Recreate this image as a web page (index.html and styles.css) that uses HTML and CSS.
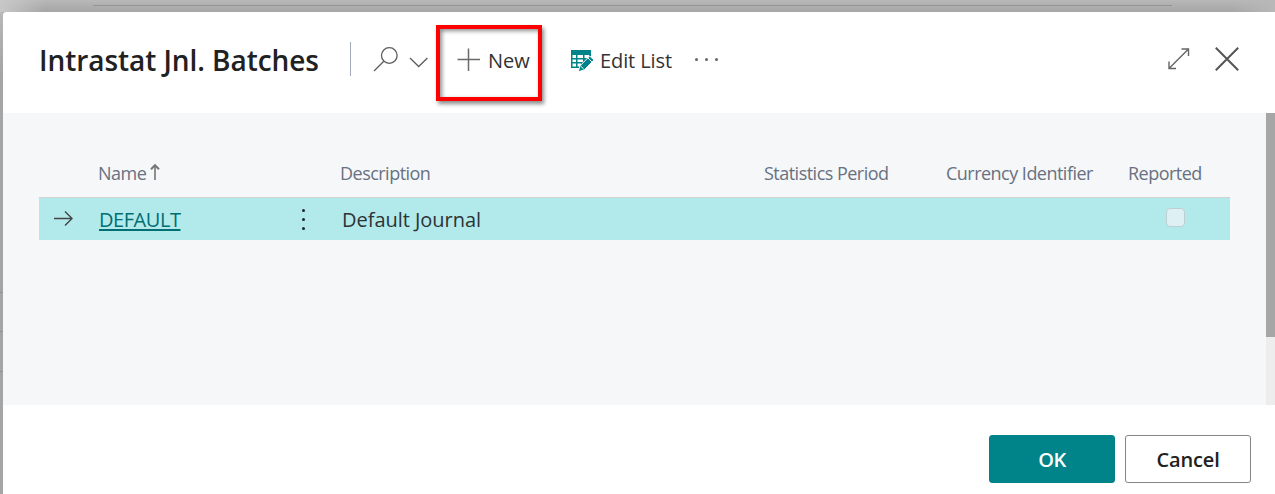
FILE: index.html
```html
<!DOCTYPE html>
<html lang="en">
<head>
<meta charset="utf-8">
<title>Intrastat Jnl. Batches</title>
<link rel="stylesheet" href="styles.css">
</head>
<body>
<div class="backdrop-top"><div class="backdrop-rule"></div></div>
<div class="stage">
  <div class="backdrop-side"><i></i><i></i><i></i></div>
  <main class="dialog">
    <header class="header">
      <h1 class="title">Intrastat Jnl. Batches</h1>
      <span class="divider"></span>
      <button class="search" aria-label="Search">
        <svg width="56" height="28" viewBox="0 0 56 28" fill="none" stroke="#5c5c5c" stroke-width="1.3"><circle cx="15.3" cy="10.5" r="7.8"/><path d="M9.8 16.2 0 26M36 13l8.7 8.5 8.7-8.5" /></svg>
      </button>
      <button class="action new">
        <svg width="24" height="24" viewBox="0 0 24 24" stroke="#6a6a6a" stroke-width="1.5"><path d="M11.5 1.5V24M.5 12.5h22.5"/></svg>
        <span class="new-label">New</span>
      </button>
      <button class="action edit">
        <svg width="24" height="22" viewBox="0 0 24 22"><path fill="#008489" d="M0 0h20v8l-6 9-5 1H0z"/><path fill="#fff" d="M1.5 5H5v3H1.5zM6.5 5H12v3H6.5zM13.5 5H18v3h-4.500zM1.500 9.500H5V12H1.500zM6.500 9.500H12V12H6.500zM1.500 13.500H5v3H1.500zM6.500 13.500H10v3H6.500z"/><path fill="#008489" stroke="#fff" stroke-width="1" d="m7.200 21.800 1.800-6L18.700 6l4.300 4.100-9.800 9.800z"/><path d="m17 8 4 4M9.500 16l3.200 3" stroke="#fff"/></svg>
        <span class="edit-label">Edit List</span>
      </button>
      <button class="more" aria-label="More options"><i></i><i></i><i></i></button>
      <div class="window-actions">
        <svg width="22" height="22" viewBox="0 0 22 22" fill="none" stroke="#666" stroke-width="1.4"><path d="M1 20.500 20.500 1M13.500 1h7v7M1 13.500v7h7"/></svg>
        <svg width="24" height="24" viewBox="0 0 24 24" stroke="#555" stroke-width="2"><path d="m.8.8 22.400 22.400M23.200.8.8 23.200"/></svg>
      </div>
    </header>
    <section class="content">
      <div class="list">
        <div class="grid head">
          <span></span>
          <span class="name-head"><span class="h-name">Name</span><svg width="10" height="16" viewBox="0 0 10 16" fill="none" stroke="#757575" stroke-width="1.600"><path d="M5 16V1"/><path d="M1 5.300 5 1.200l4 4.100" stroke-width="2"/></svg></span>
          <span></span>
          <span class="h-desc">Description</span>
          <span class="h-stat">Statistics Period</span>
          <span class="h-curr">Currency Identifier</span>
          <span class="h-rep">Reported</span>
        </div>
        <div class="grid row">
          <span class="pointer"><svg width="19" height="16" viewBox="0 0 19 16" fill="none" stroke="#444" stroke-width="1.400"><path d="M0 7.500h18M11 .5l7 7-7 7"/></svg></span>
          <a class="batch">DEFAULT</a>
          <span class="dots"><i></i><i></i><i></i></span>
          <span class="journal">Default Journal</span>
          <span></span><span></span>
          <span class="check-cell"><span class="check"></span></span>
        </div>
      </div>
      <div class="scrollbar"><div class="thumb"></div></div>
    </section>
    <footer class="footer">
      <button class="button primary"><span class="ok-label">OK</span></button>
      <button class="button"><span class="cancel-label">Cancel</span></button>
    </footer>
  </main>
</div>
<div class="highlight"></div>
</body>
</html>
```
FILE: styles.css
```css
* { box-sizing: border-box; }
body {
  margin: 0;
  height: 494px;
  overflow: hidden;
  background: #a6a6a6;
  color: #212121;
  font-family: "Open Sans", "Noto Sans", sans-serif;
}
button { border: 0; padding: 0; background: none; font: inherit; color: inherit; }
svg { display: block; flex: none; overflow: visible; }
span { white-space: nowrap; }
.backdrop-top {
  height: 12px;
  padding: 5px 103px 0 93px;
  background: linear-gradient(90deg, #c8c8c8 0, rgba(190,190,190,0) 45px, rgba(190,190,190,0) 1230px, #b8b8b8 1275px), linear-gradient(#b8b8b8, #a5a5a5);
}
.backdrop-rule { height: 1px; background: #949494; }
.stage { display: flex; height: 482px; }
.backdrop-side {
  width: 3px;
  padding-top: 280px;
  background: linear-gradient(#b8b8b8, #a5a5a5 60px, #a5a5a5);
}
.backdrop-side i { display: block; height: 1px; margin-bottom: 38px; background: #8d9096; }
.backdrop-side i:nth-child(2) { margin-bottom: 39px; }
.dialog {
  flex: 1;
  display: flex;
  flex-direction: column;
  background: #fff;
  border-top-left-radius: 3px;
}
.header { display: flex; align-items: center; height: 101px; padding: 0 36px 7px 36px; }
.title { width: 311px; margin: 0; padding-top: 2px; font-size: 28px; line-height: 38px; font-weight: 600; letter-spacing: -0.06px; white-space: nowrap; }
.divider { width: 1px; height: 34px; background: #a3abbb; }
.search { margin-left: 23px; }
.action { display: flex; align-items: center; font-size: 20px; line-height: 28px; color: #333; }
.action span { padding-top: 4px; }
.new { width: 84px; margin-left: 27px; gap: 7px; }
.edit { width: 110px; margin-left: 30px; gap: 5px; }
.edit svg { margin-top: 3px; }
.edit-label { letter-spacing: -0.1px; }
.more { display: flex; gap: 7px; margin-left: 14px; }
.more i { width: 3px; height: 3px; border-radius: 50%; background: #666; }
.window-actions { display: flex; align-items: center; gap: 25px; margin-left: auto; }
.content { display: flex; height: 292px; background: #f5f7f9; }
.list { flex: 1; padding: 36px 36px 0; }
.grid { display: grid; grid-template-columns: 59px 190px 52px 424px 182px 182px 1fr; align-items: center; }
.head { height: 48px; padding-bottom: 1px; font-size: 18px; line-height: 24px; letter-spacing: -0.52px; color: #687181; }
.name-head { display: flex; align-items: center; gap: 4px; }
.name-head svg { margin-top: -2px; }
.row { height: 43px; border-top: 1px solid #d2d2d2; background: #b2e9eb; font-size: 20px; color: #2c3333; }
.pointer { padding-left: 15px; }
.pointer svg { margin-top: -1px; }
.batch { justify-self: start; padding-left: 1px; color: #006e72; letter-spacing: -0.45px; text-decoration: underline; text-decoration-thickness: 2px; text-underline-offset: 2px; }
.dots { display: grid; gap: 6px; justify-content: start; padding-left: 14px; }
.dots i { width: 3px; height: 3px; border-radius: 50%; background: #222; }
.journal { padding-left: 2px; letter-spacing: -0.03px; }
.check-cell { padding-left: 38px; }
.check { display: block; width: 19px; height: 19px; margin-top: -3px; border: 1px solid #bdcfd1; border-radius: 4px; background: #def0f3; }
.scrollbar { width: 9px; background: #ededed; }
.thumb { height: 224px; background: #a6a6a6; }
.footer { display: flex; flex: 1; align-items: flex-start; justify-content: flex-end; gap: 10px; padding: 30px 24px 0 0; }
.button { width: 126px; height: 48px; border: 1px solid #858585; border-radius: 3px; font-size: 20px; font-weight: 600; }
.cancel-label { letter-spacing: -0.15px; }
.primary { border-color: #008489; background: #008489; color: #fff; }
.ok-label { letter-spacing: -0.5px; }
.highlight {
  position: absolute;
  left: 436px;
  top: 25px;
  width: 106px;
  height: 76px;
  border: 4px solid #f00;
  box-shadow: 2px 3px 4px rgba(0,0,0,.45), inset 2px 2px 4px rgba(0,0,0,.45);
}
```
